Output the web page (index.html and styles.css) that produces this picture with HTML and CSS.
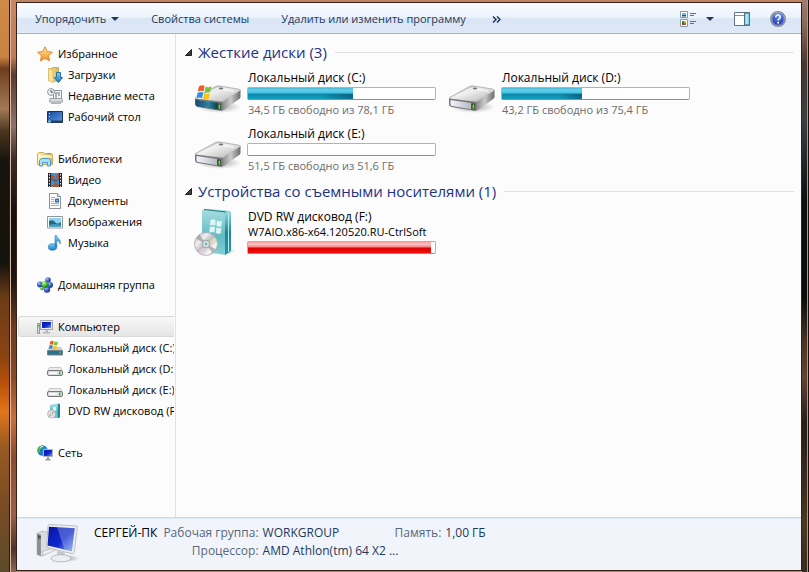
FILE: index.html
```html
<!DOCTYPE html>
<html lang="ru">
<head>
  <meta charset="UTF-8">
  <meta name="viewport" content="width=device-width, initial-scale=1.0">
  <title>Компьютер</title>
  <link rel="stylesheet" href="styles.css">
</head>
<body>
  <!-- Icon sprite -->
  <svg class="sprite" aria-hidden="true">
    <defs>
      <linearGradient id="gold" x1="0" y1="0" x2="0" y2="1"><stop offset="0" stop-color="#fff3a8"/><stop offset="1" stop-color="#f28a1c"/></linearGradient>
      <linearGradient id="folder" x1="0" y1="0" x2="1" y2="0"><stop offset="0" stop-color="#fdf3b4"/><stop offset="1" stop-color="#d9ae45"/></linearGradient>
      <linearGradient id="sky" x1="0" y1="0" x2="0" y2="1"><stop offset="0" stop-color="#7fd3f7"/><stop offset="1" stop-color="#1478c4"/></linearGradient>
      <linearGradient id="screen" x1="0" y1="0" x2="1" y2="1"><stop offset="0" stop-color="#0614a4"/><stop offset=".55" stop-color="#1028cc"/><stop offset="1" stop-color="#7ba4f0"/></linearGradient>
      <linearGradient id="desk" x1="0" y1="0" x2="1" y2="1"><stop offset="0" stop-color="#15479a"/><stop offset="1" stop-color="#5c9be6"/></linearGradient>
      <linearGradient id="metal" x1="0" y1="0" x2="1" y2="1"><stop offset="0" stop-color="#8f8f8f"/><stop offset=".4" stop-color="#f0f0f0"/><stop offset="1" stop-color="#b0b0b0"/></linearGradient>
      <linearGradient id="side" x1="0" y1="0" x2="1" y2="0"><stop offset="0" stop-color="#808080"/><stop offset=".5" stop-color="#cacaca"/><stop offset="1" stop-color="#6c6c6c"/></linearGradient>
      <linearGradient id="front" x1="0" y1="0" x2="1" y2="0"><stop offset="0" stop-color="#f4f4fa"/><stop offset="1" stop-color="#b8b8c4"/></linearGradient>
      <linearGradient id="tealfront" x1="0" y1="0" x2="1" y2="0"><stop offset="0" stop-color="#1d4a6a"/><stop offset=".6" stop-color="#2b83a2"/><stop offset="1" stop-color="#123d4a"/></linearGradient>
      <linearGradient id="box" x1="0" y1="0" x2="0" y2="1"><stop offset="0" stop-color="#a6dde0"/><stop offset=".6" stop-color="#63bcc4"/><stop offset="1" stop-color="#7fd0d6"/></linearGradient>
      <linearGradient id="boxside" x1="0" y1="0" x2="0" y2="1"><stop offset="0" stop-color="#a9e6ec"/><stop offset=".5" stop-color="#1e8793"/><stop offset="1" stop-color="#2a95a0"/></linearGradient>
      <linearGradient id="disc" x1="0" y1="0" x2="1" y2="1"><stop offset="0" stop-color="#a8a8a8"/><stop offset=".3" stop-color="#efefef"/><stop offset=".5" stop-color="#bdbdbd"/><stop offset=".75" stop-color="#f8f8f8"/><stop offset="1" stop-color="#9a9a9a"/></linearGradient>
      <radialGradient id="help" cx=".5" cy=".3" r=".7"><stop offset="0" stop-color="#6d8ff0"/><stop offset="1" stop-color="#0f2aa0"/></radialGradient>
      <radialGradient id="ballblue" cx=".35" cy=".3" r=".8"><stop offset="0" stop-color="#a9c4ff"/><stop offset=".5" stop-color="#3c5cc4"/><stop offset="1" stop-color="#152c8c"/></radialGradient>
      <radialGradient id="ballgreen" cx=".35" cy=".3" r=".8"><stop offset="0" stop-color="#d2ffb0"/><stop offset=".5" stop-color="#3fb52c"/><stop offset="1" stop-color="#137016"/></radialGradient>
      <radialGradient id="shadow"><stop offset="0" stop-color="#000" stop-opacity=".35"/><stop offset="1" stop-color="#000" stop-opacity="0"/></radialGradient>
    </defs>

    <symbol id="i-star" viewBox="0 0 16 16">
      <path d="M8 .8l2.200 4.800 5.200.6-3.900 3.500 1.100 5.200L8 12.300l-4.600 2.600 1.100-5.200L.6 6.200l5.200-.6z" fill="url(#gold)" stroke="#e08a2c" stroke-linejoin="round"/>
    </symbol>
    <symbol id="i-downloads" viewBox="0 0 16 16">
      <path d="M1.500 1.500h4v-1h6v14l-10-1z" fill="url(#folder)" stroke="#cfae58"/>
      <path d="M5.500 2.500l1 13-5-2v-12z" fill="#f7e59a" stroke="#dcc069"/>
      <path d="M9.500 5.500h4v5h2.200l-4.200 5-4.200-5h2.200z" fill="url(#sky)" stroke="#2470ae"/>
    </symbol>
    <symbol id="i-recent" viewBox="0 0 16 16">
      <path d="M6.500 2.500h8v8h-8z" fill="#f3f6f8" stroke="#8a949b"/>
      <path d="M8 5h5M8 7h2M11 7h2M8 9h2" stroke="#5e7480"/>
      <path d="M3 10.500h12l.5 3.500h-13z" fill="#d7dcdf" stroke="#9aa1a6"/>
      <path d="M4 15.200h10" stroke="#8a949b"/>
      <circle cx="4" cy="4" r="3.400" fill="#eef2f4" stroke="#8d979d"/>
      <path d="M4 2v2.200h2" fill="none" stroke="#4c5a63"/>
    </symbol>
    <symbol id="i-desktop" viewBox="0 0 16 16">
      <path d="M.5 2.500h15v11H.5z" fill="url(#desk)" stroke="#1a3258"/>
      <path d="M1 11.500h14v2H1z" fill="#2a3e60"/>
      <path d="M1 11.500h3v2H1z" fill="#7cc3f0"/>
      <path d="M2 4h1v1H2zM2 7h1v1H2z" fill="#cfe4ff"/>
    </symbol>
    <symbol id="i-libraries" viewBox="0 0 16 16">
      <path d="M.5 13.500v-11l1-1h5l1 1h7l1 1v10z" fill="url(#folder)" stroke="#cfb058"/>
      <path d="M1 5.500h14" stroke="#fff9d8" stroke-width="2"/>
      <path d="M10 2.500h3" stroke="#5fae4a"/>
      <path d="M2.500 15V9.500l2-2h7l2 2V15h-3v-3.500h-5V15z" fill="#a9dcf6" stroke="#4a9cc9"/>
    </symbol>
    <symbol id="i-video" viewBox="0 0 16 16">
      <path d="M1 1h14v14H1z" fill="#25282c"/>
      <path d="M4 1h8v14H4z" fill="#3f93cf"/>
      <path d="M4 2l4 3-4 3zM12 1v6L8 5zM5 15l3-5 4 3v2zM7 8h3v2H7z" fill="#b05334"/>
      <path d="M4 8h8" stroke="#25282c" stroke-width=".6"/>
      <path d="M2.500 2v13M13.500 2v13" stroke="#e8ebee" stroke-dasharray="1.500 1.500"/>
    </symbol>
    <symbol id="i-document" viewBox="0 0 16 16">
      <path d="M2.500.5h8l3 3v12h-11z" fill="#fdfdfe" stroke="#8b929a"/>
      <path d="M10.500.5v3h3" fill="#e2e6ea" stroke="#8b929a"/>
      <path d="M4 4.500h4M4 6.500h3M4 8.500h3M4 10.500h8M4 12.500h8" stroke="#9fb0c4"/>
      <path d="M8 5.500h4v4H8z" fill="#2f6fc0"/>
      <path d="M9.500 7h1v1h-1z" fill="#d8ecff"/>
    </symbol>
    <symbol id="i-picture" viewBox="0 0 16 16">
      <path d="M.5 2.500h15v11.500H.5z" fill="#fff" stroke="#8f979f"/>
      <path d="M2 4h12v8.500H2z" fill="#8fd0f2"/>
      <path d="M2 7q4-2 6 1t6 0v4.500H2z" fill="#1f6f78"/>
      <path d="M2 11q6-2 12 0v1.500H2z" fill="#3e9ccc"/>
    </symbol>
    <symbol id="i-music" viewBox="0 0 16 16">
      <ellipse cx="5.500" cy="12" rx="4.200" ry="3.300" fill="url(#sky)" stroke="#2b7fc0" stroke-width=".7"/>
      <path d="M8 12V.6h1.600c.2 2.800 4.600 3.400 3.600 8.400-.5-2.400-1.600-3-3.400-3.600V12z" fill="url(#sky)" stroke="#2b7fc0" stroke-width=".6"/>
    </symbol>
    <symbol id="i-homegroup" viewBox="0 0 16 16">
      <circle cx="11" cy="3" r="2.800" fill="url(#ballblue)"/>
      <circle cx="3" cy="7.500" r="3" fill="url(#ballblue)"/>
      <circle cx="13" cy="8" r="3" fill="url(#ballblue)"/>
      <circle cx="10" cy="12.500" r="3.200" fill="url(#ballblue)"/>
      <circle cx="8" cy="7.500" r="3.600" fill="url(#ballgreen)"/>
      <circle cx="5" cy="11.500" r="1.800" fill="url(#ballgreen)"/>
    </symbol>
    <symbol id="i-computer" viewBox="0 0 16 16">
      <path d="M.5 4.500h2v10h-2z" fill="#dfe2e4" stroke="#8e9498"/>
      <path d="M1 6h1v1.500H1z" fill="#3fc23f"/>
      <path d="M3.500 1.500h12v9h-12z" fill="#e6e8ea" stroke="#9da3a8"/>
      <path d="M5 3h9v6H5z" fill="url(#screen)"/>
      <path d="M8.500 11h2.500v2h-2.500zM6 13h7v1.500H6z" fill="#b6babd"/>
    </symbol>
    <symbol id="i-flag" viewBox="0 0 16 16">
      <path d="M2 2.500q3-2 5.500-.5L6.500 7.500Q4 6 .8 7.500z" fill="#ee5a24"/>
      <path d="M8.600 2.500q3 1.500 6-.3L13.200 8Q10.500 9.300 7.500 8z" fill="#7fc242"/>
      <path d="M.6 8.700Q3.800 7.300 6.300 8.700L5 14.300Q2.500 12.800-.6 14.300z" fill="#2f8fe0"/>
      <path d="M7.300 9.200q3 1.300 5.700 0L11.600 15Q9 16.200 6 14.700z" fill="#fcc419"/>
    </symbol>
    <symbol id="i-sysdrive-s" viewBox="0 0 16 16">
      <path d="M1.500 7h13l1 4H.5z" fill="#c8ccd0"/>
      <path d="M.5 10.500h15v4.500H.5z" fill="#2c6f8e" stroke="#77868e"/>
      <path d="M12.500 11.500h1v2h-1z" fill="#6be04a"/>
      <use href="#i-flag" x="2" y="0" width="10" height="10"/>
    </symbol>
    <symbol id="i-drive-s" viewBox="0 0 16 16">
      <path d="M2.500 6.500h11l2 4H.5z" fill="#ececee" stroke="#b7b9bc" stroke-width=".8"/>
      <rect x=".5" y="9.500" width="15" height="5" rx="1.500" fill="#d9dade" stroke="#76797d"/>
      <path d="M2 11h8v2H2z" fill="#f8f8fb"/>
      <path d="M12 10.500h1.500v3H12z" fill="#35b82b"/>
    </symbol>
    <symbol id="i-dvd-s" viewBox="0 0 16 16">
      <path d="M3 2l8-1.500 2 .8v13L9 15.200 3 14z" fill="url(#box)"/>
      <path d="M11 .5l2 .8v13l-2.500.9z" fill="#1e8793"/>
      <path d="M6 4l3-.5v4.500l-3-.3z" fill="#d7f4f6"/>
      <circle cx="4.500" cy="11" r="4" fill="url(#disc)" stroke="#999" stroke-width=".5"/>
      <circle cx="4.500" cy="11" r="1.200" fill="#fff" stroke="#888" stroke-width=".5"/>
    </symbol>
    <symbol id="i-network" viewBox="0 0 16 16">
      <circle cx="5.500" cy="5.500" r="5.200" fill="#2478d2"/>
      <path d="M2 2q3-2 5-1-1 3-3 3t-1 3l-2 1q-1.500-3 1-6zM6 5l3-2 1 3-3 4z" fill="#49c24c"/>
      <path d="M3 2.500q1.500-1.300 3-1" stroke="#d6f0ff" fill="none"/>
      <path d="M6.500 4.500h9v7h-9z" fill="url(#screen)" stroke="#aeb6be"/>
      <path d="M10 12h2v2h-2zM8.500 14h5v1.500h-5z" fill="#8f979f"/>
    </symbol>

    <symbol id="i-drive" viewBox="0 0 48 30">
      <ellipse cx="25" cy="23" rx="22" ry="6" fill="url(#shadow)"/>
      <path d="M1.500 13.500L22 2.300q1.500-.6 3-.4l20 3.300q2 .5 1.200 2L29.500 17q-1 1-3 .8L3 15.200q-2-.5-1.500-1.700z" fill="url(#metal)" stroke="#9c9c9c" stroke-width=".7"/>
      <path d="M46.500 6.500v6.300q0 1.200-1 1.900L30 26q-1.500 1-3 .8V18q2 0 3-1z" fill="url(#side)"/>
      <path d="M1 14.500q12 1.800 26 3.300 1.500.3 1.500 2v5.400q0 1.800-2 1.600L3.500 23Q1 22.500 1 20.300z" fill="#75757a"/>
      <path d="M2.500 16q11 1.700 20.500 3v6.200L4 22q-1.500-.3-1.500-2z" fill="url(#front)"/>
      <path d="M23.500 19.500l3 .3v5.800l-3-.3z" fill="#173a12"/>
      <path d="M24.500 20.500h1.500v4.200h-1.500z" fill="#6be62c"/>
      <path d="M8 12.500L23 4.500l17 2.800" fill="none" stroke="#fff" stroke-width="1" opacity=".8"/>
      <ellipse cx="27" cy="4.500" rx="2.300" ry="1" fill="#777"/>
    </symbol>
    <symbol id="i-sysdrive" viewBox="0 0 48 30">
      <use href="#i-drive" width="48" height="30"/>
      <path d="M1.500 15.500q11 1.700 22 3.200v6.700L4 22.500q-2.500-.3-2.500-2.500z" fill="url(#tealfront)"/>
      <use href="#i-flag" x="3" y="0" width="16" height="16"/>
    </symbol>
    <symbol id="i-dvd" viewBox="0 0 48 48">
      <ellipse cx="26" cy="43" rx="16" ry="4" fill="url(#shadow)"/>
      <path d="M8 3q0-2 2-1.800L30 4q1.500.3 1.500 2l-.5 41L10 42.500 8 40z" fill="url(#box)"/>
      <path d="M10 1.200L14 .8 35.500 2.800Q37 3 37 5v37q0 1.500-1.500 2.200L31 47V6q0-1.500-1.500-2z" fill="url(#boxside)"/>
      <path d="M34.500 5v39" stroke="#b6eef2" stroke-width="1"/>
      <path d="M10 1.500L32 4" stroke="#1d7680" stroke-width="1" fill="none"/>
      <path d="M16.500 12q3-1.500 5 0v5.500q-2.500-1.200-5.500 0zM22.800 12.500q2.700 1.500 5 .3l-.3 5.500q-2.700 1-5-.3zM15.800 19q3-1.200 5.200 0l-.5 5.500q-2.500-1-5.200.2zM22.300 19.500q2.500 1.200 5 .3l-.4 5.400q-2.500 1-4.900-.3z" fill="#dff6f7"/>
      <circle cx="12" cy="36" r="11.500" fill="url(#disc)" stroke="#a4a4a4" stroke-width=".7"/>
      <path d="M12 36L2.500 31l3-4.500zM12 36l9.500 5-3 4z" fill="#7f8583" opacity=".55"/>
      <path d="M12 36l8.500-6.500 2 3.500z" fill="#d6e7b5" opacity=".7"/>
      <path d="M12 36L8 46.500 4.500 44z" fill="#f2c9e4" opacity=".7"/>
      <circle cx="12" cy="36" r="4" fill="#c9cccc" stroke="#8c8c8c" stroke-width=".6"/>
      <circle cx="12" cy="36" r="2" fill="#6db3ba" stroke="#fff" stroke-width=".8"/>
    </symbol>
    <symbol id="i-pc" viewBox="0 0 48 42">
      <ellipse cx="30" cy="36" rx="16" ry="4" fill="url(#shadow)"/>
      <path d="M1 10l5-2.500 9 1.500v20L6 34l-5-2z" fill="#dadcde" stroke="#a6a9ac" stroke-width=".7"/>
      <path d="M1 10l4 1v22.500l-4-1.500z" fill="#8b8f92"/>
      <path d="M2 12l2.500.5v3L2 15z" fill="#222"/>
      <path d="M2.500 13.500h1.500v1H2.500z" fill="#63f03a"/>
      <path d="M6 29l12-4 3 2-13 6z" fill="#eceeef" stroke="#a6a9ac" stroke-width=".6"/>
      <path d="M12.500 2q0-1.500 1.500-1.500L42 2q1.500 0 1.300 1.500L40 30q-.3 1.500-2 1.200L12.500 25q-1.500-.3-1.500-2z" fill="#eceeef" stroke="#aeb2b5" stroke-width=".8"/>
      <path d="M13.500 3l27 1.500L37.500 28.500 12 22.500z" fill="url(#screen)"/>
      <path d="M22 3.500l7.500 23 8 2L40.500 4.500z" fill="#fff" opacity=".25"/>
      <path d="M22 28l8 2v5h-8z" fill="#c5c8ca"/>
      <ellipse cx="26" cy="36" rx="10.500" ry="3.800" fill="#eceeef" stroke="#abaeb1" stroke-width=".8"/>
    </symbol>

    <symbol id="i-views" viewBox="0 0 16 16">
      <path d="M.5.5h7v6h-7zM.5 8.500h7v7h-7z" fill="#fff" stroke="#8d97a5"/>
      <path d="M2 2h4v2H2z" fill="#63c3ee"/><path d="M2 4h4v1.500H2z" fill="#1f5b6b"/>
      <path d="M2 10h2v2H2zM4.500 12h1.500v2H4.500z" fill="#1f9a2c"/><path d="M4 10h2v2H4z" fill="#e8a81c"/><path d="M2 12h2.500v2H2z" fill="#b02828"/>
      <path d="M10 2.500h6M10 4.500h4M10 10.500h6M10 12.500h4" stroke="#5d6f88"/>
    </symbol>
    <symbol id="i-pane" viewBox="0 0 16 16">
      <path d="M.5 1.500h15v13H.5z" fill="#fff" stroke="#5d738f"/>
      <path d="M1 4.500h9" stroke="#7d92ab"/>
      <path d="M10.500 2h5v12h-5z" fill="#7fd3ea" stroke="#4a708f"/>
      <path d="M12 3h1.500v10H12z" fill="#b8ecf7"/>
    </symbol>
    <symbol id="i-help" viewBox="0 0 16 16">
      <circle cx="8" cy="8" r="7.300" fill="url(#help)" stroke="#8f8f94" stroke-width="1.400"/>
      <circle cx="8" cy="8" r="6.200" fill="none" stroke="#d8dcec" stroke-width=".6"/>
      <path d="M5.700 6.200Q5.800 4 8 4t2.300 2q0 1.200-1.200 1.900-1 .6-1 1.700" fill="none" stroke="#fff" stroke-width="1.500"/>
      <circle cx="8.100" cy="11.700" r="1" fill="#fff"/>
    </symbol>
  </svg>

  <div class="window">
    <div class="toolbar">
      <button class="tool">Упорядочить <span class="caret"></span></button>
      <button class="tool">Свойства системы</button>
      <button class="tool">Удалить или изменить программу</button>
      <button class="tool more" aria-label="Дополнительные команды">
        <svg width="9" height="7" viewBox="0 0 9 7"><path d="M1 .5l3 3-3 3M5 .5l3 3-3 3" fill="none" stroke="#1e395b" stroke-width="1.500"/></svg>
      </button>
      <div class="tool-icons">
        <button class="icon-btn" aria-label="Изменить представление"><svg class="icon"><use href="#i-views"/></svg><span class="caret"></span></button>
        <button class="icon-btn" aria-label="Область просмотра"><svg class="icon"><use href="#i-pane"/></svg></button>
        <button class="icon-btn" aria-label="Справка"><svg class="icon"><use href="#i-help"/></svg></button>
      </div>
    </div>

    <div class="body">
      <nav class="sidebar">
        <div class="group">
          <a class="root" href="#"><svg class="icon"><use href="#i-star"/></svg>Избранное</a>
          <a href="#"><svg class="icon"><use href="#i-downloads"/></svg>Загрузки</a>
          <a href="#"><svg class="icon"><use href="#i-recent"/></svg>Недавние места</a>
          <a href="#"><svg class="icon"><use href="#i-desktop"/></svg>Рабочий стол</a>
        </div>
        <div class="group">
          <a class="root" href="#"><svg class="icon"><use href="#i-libraries"/></svg>Библиотеки</a>
          <a href="#"><svg class="icon"><use href="#i-video"/></svg>Видео</a>
          <a href="#"><svg class="icon"><use href="#i-document"/></svg>Документы</a>
          <a href="#"><svg class="icon"><use href="#i-picture"/></svg>Изображения</a>
          <a href="#"><svg class="icon"><use href="#i-music"/></svg>Музыка</a>
        </div>
        <div class="group">
          <a class="root" href="#"><svg class="icon"><use href="#i-homegroup"/></svg>Домашняя группа</a>
        </div>
        <div class="group">
          <a class="root selected" href="#"><svg class="icon"><use href="#i-computer"/></svg>Компьютер</a>
          <a href="#"><svg class="icon"><use href="#i-sysdrive-s"/></svg>Локальный диск (C:)</a>
          <a href="#"><svg class="icon"><use href="#i-drive-s"/></svg>Локальный диск (D:)</a>
          <a href="#"><svg class="icon"><use href="#i-drive-s"/></svg>Локальный диск (E:)</a>
          <a href="#"><svg class="icon"><use href="#i-dvd-s"/></svg>DVD RW дисковод (F:)</a>
        </div>
        <div class="group">
          <a class="root" href="#"><svg class="icon"><use href="#i-network"/></svg>Сеть</a>
        </div>
      </nav>

      <main class="content">
        <h2><button class="expander"><svg width="7" height="7" viewBox="0 0 7 7"><path d="M6.500.5v6h-6z" fill="#404040" stroke="#1c1c1c"/></svg>Жесткие диски (3)</button></h2>
        <div class="tiles">
          <div class="tile">
            <svg class="drive-icon"><use href="#i-sysdrive"/></svg>
            <div class="info">
              <p>Локальный диск (C:)</p>
              <div class="bar"><div class="fill" style="width: 56%"></div></div>
              <p class="free">34,5 ГБ свободно из 78,1 ГБ</p>
            </div>
          </div>
          <div class="tile">
            <svg class="drive-icon"><use href="#i-drive"/></svg>
            <div class="info">
              <p>Локальный диск (D:)</p>
              <div class="bar"><div class="fill" style="width: 43%"></div></div>
              <p class="free">43,2 ГБ свободно из 75,4 ГБ</p>
            </div>
          </div>
          <div class="tile">
            <svg class="drive-icon"><use href="#i-drive"/></svg>
            <div class="info">
              <p>Локальный диск (E:)</p>
              <div class="bar"><div class="fill" style="width: 0%"></div></div>
              <p class="free">51,5 ГБ свободно из 51,6 ГБ</p>
            </div>
          </div>
        </div>

        <h2><button class="expander"><svg width="7" height="7" viewBox="0 0 7 7"><path d="M6.500.5v6h-6z" fill="#404040" stroke="#1c1c1c"/></svg>Устройства со съемными носителями (1)</button></h2>
        <div class="tiles">
          <div class="tile">
            <svg class="dvd-icon"><use href="#i-dvd"/></svg>
            <div class="info">
              <p>DVD RW дисковод (F:)</p>
              <p class="volume">W7AIO.x86-x64.120520.RU-CtrlSoft</p>
              <div class="bar"><div class="fill full" style="width: 98%"></div></div>
            </div>
          </div>
        </div>
      </main>
    </div>

    <footer class="details">
      <svg class="pc-icon"><use href="#i-pc"/></svg>
      <strong class="pc-name">СЕРГЕЙ-ПК</strong>
      <dl>
        <dt>Рабочая группа:</dt><dd>WORKGROUP</dd>
        <dt>Процессор:</dt><dd>AMD Athlon(tm) 64 X2 ...</dd>
      </dl>
      <dl>
        <dt>Память:</dt><dd>1,00 ГБ</dd>
      </dl>
    </footer>
  </div>
</body>
</html>
```
FILE: styles.css
```css
* {
  box-sizing: border-box;
}

/* Desktop wallpaper behind the window */
body {
  margin: 0;
  padding-left: 9px;
  height: 100vh;
  display: flex;
  font-family: "Open Sans", "Noto Sans", sans-serif;
  font-size: 12px;
  line-height: 15px;
  color: #000;
  background: linear-gradient(#cf8a45 0, #c98240 10%, #6e3d1d 12%, #a37a55 19%, #4a3520 23%, #17140d 28%, #14120c 46%, #6a3c17 52%, #8a4312 62%, #b8500a 67%, #e0761a 72%, #9a5a22 78%, #7a4c22 88%, #5d4a2c 100%);
}

h2, p, dl, dd {
  margin: 0;
}

button {
  font: inherit;
  color: inherit;
  background: none;
  border: 0;
  padding: 0;
  cursor: pointer;
}

a {
  color: inherit;
  text-decoration: none;
}

.sprite {
  position: absolute;
  width: 0;
  height: 0;
}

.icon {
  width: 16px;
  height: 16px;
  flex: none;
}

/* Glass frame */
.window {
  flex: 1;
  min-width: 0;
  display: flex;
  flex-direction: column;
  padding: 2px 6px 1px 6px;
  border-left: 1px solid #2b1a12;
  border-right: 1px solid #17110e;
  box-shadow: inset 1px 0 #d9b9a6, inset -1px 0 #a59a94;
  background:
    linear-gradient(#a07c6c 0, #8a6a5c 4%, #4a382e 11%, #3a3f40 21%, #0d100f 35%, #0b0c0b 52%, #4a3626 60%, #5d4434 66%, #2a1d16 74%, #3d2b1d 85%, #4a3922 92%, #3a2a1c 100%) right / 6px 100% no-repeat,
    linear-gradient(#c98662 0, #c07c58 10%, #5a3c2e 13%, #8d736a 22%, #3a2d28 28%, #15110f 37%, #1c1512 49%, #6b3a20 57%, #8a4a28 66%, #c9703c 73%, #8c4c30 80%, #9a6048 90%, #4e332a 96%, #8a6656 100%) left / 6px 100% no-repeat,
    #c08465;
}

.toolbar {
  display: flex;
  align-items: center;
  height: 32px;
  padding: 0 15px 0 2px;
  border: 1px solid #33211a;
  border-width: 1px 1px 0;
  box-shadow: inset 0 -1px #a0b3d0;
  background: linear-gradient(#fbfdff 0, #eaf2fb 48%, #dbe6f4 50%, #dde7f5 90%, #e4ecf8 100%);
  color: #1e395b;
  font-size: 11px;
}

.tool {
  padding: 0 16px;
  white-space: nowrap;
}

.more {
  padding: 0 10px;
}

.caret {
  display: inline-block;
  border: 4px solid transparent;
  border-top-color: #1e395b;
  border-bottom: 0;
  margin-left: 2px;
  vertical-align: 2px;
}

.tool-icons {
  margin-left: auto;
  display: flex;
  gap: 20px;
}

.icon-btn {
  display: flex;
  align-items: center;
}

.icon-btn .caret {
  margin-left: 10px;
}

.body {
  flex: 1;
  min-height: 0;
  display: flex;
  border: 1px solid #33211a;
  border-width: 0 1px;
  background: #fcfcfc;
}

/* Navigation tree */
.sidebar {
  width: 159px;
  flex: none;
  padding: 9px 1px 0;
  border-right: 1px solid #d6e5f5;
  overflow: hidden;
  font-size: 11px;
}

.group {
  margin-bottom: 21px;
}

.sidebar a {
  display: flex;
  align-items: center;
  gap: 5px;
  height: 21px;
  padding-left: 29px;
  white-space: nowrap;
  overflow: hidden;
}

.sidebar .root {
  padding-left: 19px;
}

.sidebar .selected {
  padding-left: 18px;
  border: 1px solid #d9d9d9;
  border-right: 0;
  border-radius: 3px 0 0 3px;
  background: linear-gradient(#f8f8f8, #e5e5e5);
}

/* Drive list */
.content {
  flex: 1;
  min-width: 0;
  padding: 8px 7px 0 9px;
}

h2 {
  display: flex;
  align-items: center;
  gap: 8px;
  font-size: 15px;
  font-weight: normal;
  line-height: 20px;
  color: #1e3287;
}

h2::after {
  content: "";
  flex: 1;
  height: 1px;
  background: #e2e2e2;
}

.expander {
  display: flex;
  align-items: center;
  gap: 6px;
}

.tiles {
  display: flex;
  flex-wrap: wrap;
  padding: 7px 0 0 9px;
}

.tile {
  width: 254px;
  height: 56px;
  display: flex;
  gap: 5px;
}

.drive-icon {
  width: 48px;
  height: 30px;
  margin-top: 15px;
}

.dvd-icon {
  width: 48px;
  height: 48px;
}

.info {
  width: 189px;
  padding-top: 1px;
}

.info p {
  padding-left: 1px;
  white-space: nowrap;
}

.bar {
  height: 13px;
  margin: 2px 0;
  border: 1px solid #b2b2b2;
  border-bottom-color: #8f8f8f;
  border-radius: 2px;
  background: #fff;
}

.fill {
  height: 100%;
  background:
    linear-gradient(90deg, transparent 70%, rgba(0, 50, 80, 0.45)) bottom / 100% 50% no-repeat,
    linear-gradient(#4fb9d6 0, #5fd0ee 20%, #43bfe0 48%, #0c87a6 52%, #12a0bf 100%);
}

.full {
  background: linear-gradient(#f8a0a0 0, #ffc0c0 20%, #f58080 48%, #dc0000 52%, #f01010 100%);
}

.info .free {
  color: #6d6d6d;
  font-size: 11px;
}

.info .volume {
  font-size: 11px;
}

/* Details pane */
.details {
  display: flex;
  padding: 7px 19px 6px 19px;
  border: 1px solid #33211a;
  border-top: 0;
  box-shadow: inset 0 1px #ccd9ea, inset 0 2px #dfe8f5;
  background: #f1f5fb;
  line-height: 18px;
}

.pc-icon {
  width: 46px;
  height: 40px;
  margin-right: 12px;
}

.pc-name {
  font-weight: normal;
  margin-right: 6px;
}

.details dl {
  display: grid;
  grid-template-columns: auto 132px;
  column-gap: 4px;
  align-content: start;
}

.details dt {
  color: #5a6779;
  text-align: right;
}

.details dd {
  color: #1e395b;
  white-space: nowrap;
}
```
